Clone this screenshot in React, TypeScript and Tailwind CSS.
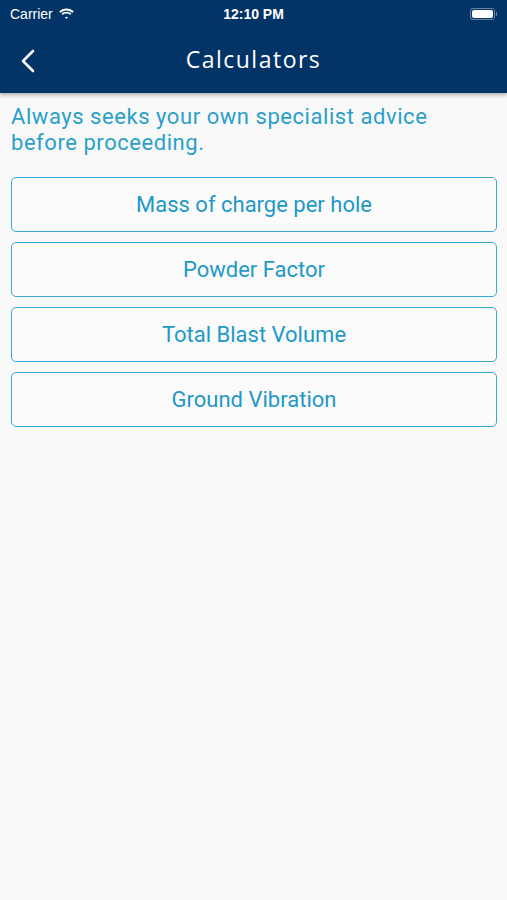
import React from "react";

const items = ["Mass of charge per hole", "Powder Factor", "Total Blast Volume", "Ground Vibration"];

function Wifi() {
  return (
    <svg width="17" height="12" viewBox="0 0 17 12" fill="white">
      <path d="M8.5 2.4c2.3 0 4.4.9 6 2.4l1.3-1.3C13.9 1.6 11.3.5 8.5.5S3.1 1.6 1.2 3.5l1.3 1.3c1.6-1.5 3.7-2.4 6-2.4z" />
      <path d="M8.5 5.6c1.4 0 2.6.5 3.6 1.4l1.3-1.3C12.1 4.5 10.4 3.8 8.5 3.8S4.9 4.5 3.6 5.7L4.9 7c1-.9 2.2-1.4 3.6-1.4z" />
      <path d="M8.5 8.7c.6 0 1.1.2 1.5.6L8.5 11 7 9.3c.4-.4.9-.6 1.5-.6z" />
    </svg>
  );
}

export default function App() {
  return (
    <div className="min-h-[900px] w-[507px] bg-[#f9f9f9]" style={{ fontFamily: "Roboto, sans-serif" }}>
      <div className="bg-[#023468] shadow-[0_2px_4px_rgba(0,0,0,0.3)] relative">
        <div className="h-[28px] flex items-center justify-between px-[10px] text-white">
          <div className="flex items-center gap-[5px] text-[14px]" style={{ fontFamily: "'Liberation Sans', sans-serif" }}>
            <span>Carrier</span>
            <Wifi />
          </div>
          <span className="text-[14px] font-bold absolute left-1/2 -translate-x-1/2" style={{ fontFamily: "'Liberation Sans', sans-serif" }}>12:10 PM</span>
          <div className="flex items-center">
            <div className="w-[25px] h-[12px] rounded-[3px] border border-[#6b83a3] p-[1px]">
              <div className="w-full h-full bg-white rounded-[2px]" />
            </div>
            <div className="w-[1.5px] h-[4px] bg-[#6b83a3] ml-[1px]" />
          </div>
        </div>
        <div className="h-[65px] flex items-center relative">
          <svg className="ml-[20px]" width="16" height="24" viewBox="0 0 16 24" fill="none" stroke="white" strokeWidth="2.6" strokeLinecap="round" strokeLinejoin="round">
            <path d="M13 2 3 12l10 10" />
          </svg>
          <span className="absolute left-1/2 -translate-x-1/2 -translate-y-[1px] text-white text-[23px] tracking-[1.5px]" style={{ fontFamily: "'Open Sans', sans-serif" }}>Calculators</span>
        </div>
      </div>
      <div className="pl-[11px] pr-[10px] pt-[11px]">
        <p className="text-[#2a9fcb] text-[22px] leading-[26px] tracking-[0.55px] w-[450px]">
          Always seeks your own specialist advice before proceeding.
        </p>
        <div className="mt-[21px] flex flex-col gap-[10px]">
          {items.map((t) => (
            <button key={t} className="h-[55px] w-full border-[1.5px] border-[#3aa8d4] rounded-[5px] text-[#2298c8] text-[22px] bg-white/40">
              {t}
            </button>
          ))}
        </div>
      </div>
    </div>
  );
}
